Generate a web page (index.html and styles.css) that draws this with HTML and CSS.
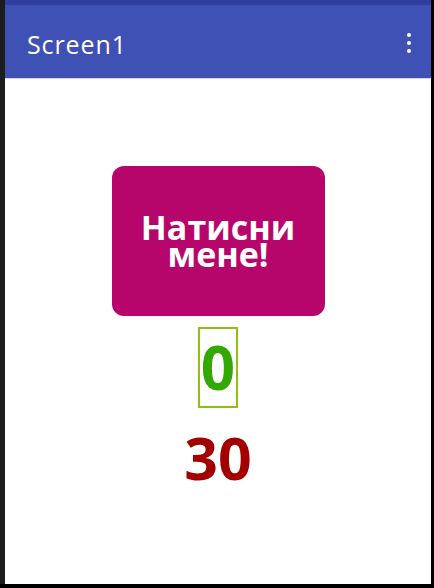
FILE: index.html
```html
<!DOCTYPE html>
<html>
<head>
<meta charset="utf-8">
<link rel="stylesheet" href="styles.css">
</head>
<body>
<div class="phone">
  <div class="status"></div>
  <header class="appbar">
    <span class="title">Screen1</span>
    <span class="menu" aria-label="more">
      <i></i><i></i><i></i>
    </span>
  </header>
  <main class="content">
    <button class="press">Натисни<br>мене!</button>
    <div class="count">0</div>
    <div class="timer">30</div>
  </main>
</div>
</body>
</html>
```
FILE: styles.css
```css
* { box-sizing: border-box; }
html, body { margin: 0; padding: 0; }
body {
  width: 434px;
  height: 588px;
  background: #000;
  overflow: hidden;
}
.phone {
  display: flex;
  flex-direction: column;
  height: 584px;
  margin: 0 3px 0 5px;
  background: #fff;
  box-shadow: -5px 0 0 #1c1c1c;
}
.status {
  height: 5px;
  background: #303f9f;
}
.appbar {
  height: 74px;
  background: #3f51b5;
  border-bottom: 1px solid #d6d6d6;
  display: flex;
  align-items: center;
  justify-content: space-between;
  padding: 0 20px 0 22px;
}
.title {
  font-family: "Open Sans", sans-serif;
  font-size: 25px;
  color: #fff;
  letter-spacing: 0.9px;
  margin-top: 4px;
}
.menu {
  display: flex;
  flex-direction: column;
  gap: 4px;
  margin-top: 2px;
}
.menu i {
  display: block;
  width: 4px;
  height: 4px;
  border-radius: 50%;
  background: #fff;
}
.content {
  flex: 1;
  display: flex;
  flex-direction: column;
  align-items: center;
  padding-top: 87px;
}
.press {
  width: 213px;
  height: 150px;
  border: none;
  border-radius: 12px;
  background: #b7066b;
  color: #fff;
  font-family: "Open Sans", sans-serif;
  font-weight: 700;
  font-size: 34px;
  line-height: 27px;
  padding: 0 0 0;
}
.count {
  margin-top: 11px;
  border: 2px solid #8cc310;
  height: 81px;
  padding: 0 1px;
  font-family: "Open Sans", sans-serif;
  font-weight: 700;
  font-size: 60px;
  line-height: 77px;
  color: #33a800;
}
.timer {
  margin-top: 11px;
  font-family: "Open Sans", sans-serif;
  font-weight: 700;
  font-size: 59px;
  line-height: 77px;
  color: #a30000;
}
```
